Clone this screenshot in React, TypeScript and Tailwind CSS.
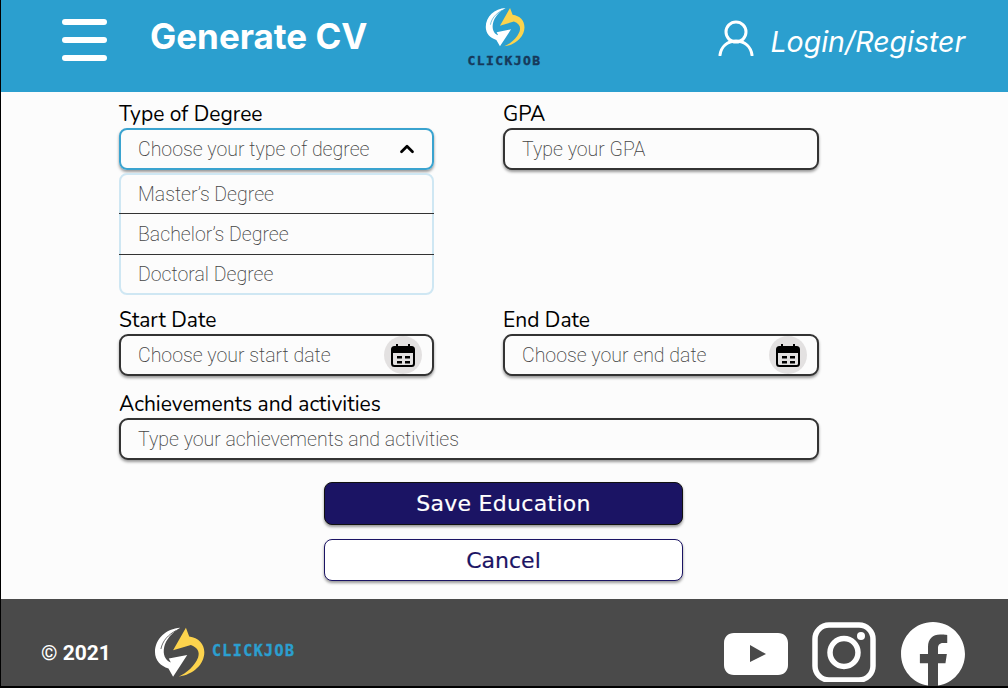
import { FaFacebook } from "react-icons/fa";
import { LuChevronUp } from "react-icons/lu";

const labelClass = "font-['Nunito',sans-serif] text-[21px] leading-[30px] h-[28px] text-black mb-[1px]";
const hintClass = "font-['Roboto',sans-serif] font-extralight text-[19.5px] leading-[28px] pt-[2px] text-[#444]";
const boxShadow = "shadow-[0_2px_3px_rgba(0,0,0,0.4)]";

function Logo({ className, bg }: { className: string; bg: string }) {
	return (
		<svg viewBox="460 95 155 152" className={className}>
			<path
				d="M540 97C497 100 463 130 463 171C463 196 480 214 504 221L518 246L561 180L505 191L511 203C494 197 486 178 491 156C496 133 515 111 540 97Z"
				fill="#fff"
			/>
			<path d="M527 106C504 118 486 136 481 162" fill="none" stroke={bg} strokeWidth="2.5" />
			<path
				d="M557 97L518 166L572 150C592 158 600 170 594 188C585 212 560 235 535 246C580 240 613 208 613 172C613 146 595 128 567 124Z"
				fill="#fcd34d"
			/>
		</svg>
	);
}

function Field({ label, placeholder, icon }: { label: string; placeholder: string; icon?: boolean }) {
	return (
		<div>
			<div className={labelClass}>{label}</div>
			<div className={`h-[42px] flex items-center justify-between pl-[17px] pr-[10px] bg-[#fcfcfc] border-2 border-[#333] rounded-[9px] ${boxShadow}`}>
				<span className={hintClass}>{placeholder}</span>
				{icon && (
					<span className="w-[38px] h-[38px] rounded-full bg-[#e3e1e1] flex items-center justify-center">
						<svg viewBox="0 0 26 26" className="w-[26px] h-[26px]">
							<path d="M7 2v4M19 2v4" stroke="#000" strokeWidth="2" />
							<rect x="2" y="5" width="22" height="19" rx="2.5" fill="none" stroke="#000" strokeWidth="2" />
							<path d="M2 6h22v5H2z" fill="#000" />
							<path d="M7 14h5v2.5H7zM15 14h5v2.5h-5zM7 19h5v2.5H7zM15 19h5v2.5h-5z" fill="#000" />
						</svg>
					</span>
				)}
			</div>
		</div>
	);
}

export default function App() {
	const degrees = [
		{ name: "Master’s Degree", row: "h-[39px] border-b border-[#333]" },
		{ name: "Bachelor’s Degree", row: "h-[41px] border-b border-[#333]" },
		{ name: "Doctoral Degree", row: "flex-1" },
	];

	return (
		<div className="w-[1008px] h-[688px] flex flex-col overflow-hidden bg-[#fcfcfc] border-l border-black">
			<header className="h-[92px] shrink-0 flex items-start bg-[#2b9fcf] text-white font-['Inter',sans-serif]">
				<div className="ml-[61px] mt-[19px] w-[45px] flex flex-col gap-[12px]">
					<span className="h-[6px] rounded-full bg-white" />
					<span className="h-[6px] rounded-full bg-white" />
					<span className="h-[6px] rounded-full bg-white" />
				</div>
				<h1 className="ml-[43px] mt-[14px] text-[35px] leading-[44px] font-bold whitespace-nowrap">Generate CV</h1>
				<div className="ml-[100px] mt-[7px] w-[74px] flex flex-col items-center">
					<Logo className="w-[40px] h-[40px]" bg="#2b9fcf" />
					<span className="mt-[7px] font-['DejaVu_Sans_Mono',monospace] font-bold text-[13px] leading-[14px] tracking-[1.4px] text-[#16395a] [-webkit-text-stroke:0.4px_#16395a]">
						CLICKJOB
					</span>
				</div>
				<svg viewBox="0 0 36 36" className="ml-[176px] mt-[20px] w-[36px] h-[36px]" fill="none" stroke="#fff" strokeWidth="3" strokeLinecap="round">
					<circle cx="18" cy="12" r="10" />
					<path d="M2 35C3 27 9 21 18 21C27 21 33 27 34 35" />
				</svg>
				<span className="ml-[17px] mt-[22px] text-[28.5px] leading-[40px] italic font-normal whitespace-nowrap">Login/Register</span>
			</header>

			<main className="flex-1 pl-[118px]">
				<div className="w-[700px] pt-[7px] grid grid-cols-[315px_316px] gap-x-[69px]">
					<div>
						<div className={labelClass}>Type of Degree</div>
						<div className={`h-[42px] flex items-center justify-between pl-[17px] pr-[14px] border-2 border-[#3aa3cf] rounded-[8px] ${boxShadow}`}>
							<span className={hintClass}>Choose your type of degree</span>
							<LuChevronUp className="w-[22px] h-[22px] text-black" strokeWidth={3} />
						</div>
						<div className="mt-[3px] h-[122px] flex flex-col border-2 border-[#cfe7f3] rounded-[8px]">
							{degrees.map((d) => (
								<div key={d.name} className={`${d.row} -mx-[2px] flex items-center pl-[19px] ${hintClass}`}>
									{d.name}
								</div>
							))}
						</div>
					</div>
					<Field label="GPA" placeholder="Type your GPA" />
				</div>

				<div className="w-[700px] mt-[10px] grid grid-cols-[315px_316px] gap-x-[69px]">
					<Field label="Start Date" placeholder="Choose your start date" icon />
					<Field label="End Date" placeholder="Choose your end date" icon />
				</div>

				<div className="w-[700px] mt-[13px]">
					<Field label="Achievements and activities" placeholder="Type your achievements and activities" />
				</div>

				<div className="ml-[205px] w-[359px] mt-[22px] flex flex-col gap-[14px]">
					<button className={`h-[43px] rounded-[8px] bg-[#1b1464] border border-[#111] text-white font-['DejaVu_Sans',sans-serif] text-[22px] tracking-[0.3px] [-webkit-text-stroke:0.2px_#fff] ${boxShadow}`}>
						Save Education
					</button>
					<button className={`h-[42px] rounded-[8px] bg-white border border-[#1b1464] text-[#1b1464] font-['DejaVu_Sans',sans-serif] text-[22px] [-webkit-text-stroke:0.2px_#1b1464] ${boxShadow}`}>
						Cancel
					</button>
				</div>
			</main>

			<footer className="h-[89px] shrink-0 overflow-hidden flex items-start bg-[#4a4a4a] border-b-2 border-black text-white">
				<span className="ml-[40px] mt-[40px] font-['Roboto',sans-serif] font-bold text-[21px] leading-[28px] whitespace-nowrap">© 2021</span>
				<Logo className="ml-[43px] mt-[28px] w-[51px] h-[50px]" bg="#4a4a4a" />
				<span className="ml-[7px] mt-[44px] font-['DejaVu_Sans_Mono',monospace] font-bold text-[15px] leading-[16px] tracking-[1.4px] text-[#2b9fcf] [-webkit-text-stroke:0.4px_#2b9fcf]">
					CLICKJOB
				</span>
				<div className="ml-auto mr-[42px] flex items-start gap-[24px]">
					<svg viewBox="0 0 64 42" className="mt-[34px] w-[64px] h-[42px]">
						<path
							fillRule="evenodd"
							d="M10 0H54C60 0 64 4 64 10V32C64 38 60 42 54 42H10C4 42 0 38 0 32V10C0 4 4 0 10 0ZM26 12V29L42 21Z"
							fill="#fff"
						/>
					</svg>
					<svg viewBox="0 0 64 60" className="mt-[23px] w-[64px] h-[60px]" fill="none" stroke="#fff" strokeWidth="5.5">
						<rect x="3" y="3" width="58" height="55" rx="14" />
						<circle cx="32" cy="30.5" r="14" />
						<circle cx="49" cy="14" r="4" fill="#fff" stroke="none" />
					</svg>
					<FaFacebook className="mt-[22px] w-[66px] h-[66px] shrink-0" />
				</div>
			</footer>
		</div>
	);
}
